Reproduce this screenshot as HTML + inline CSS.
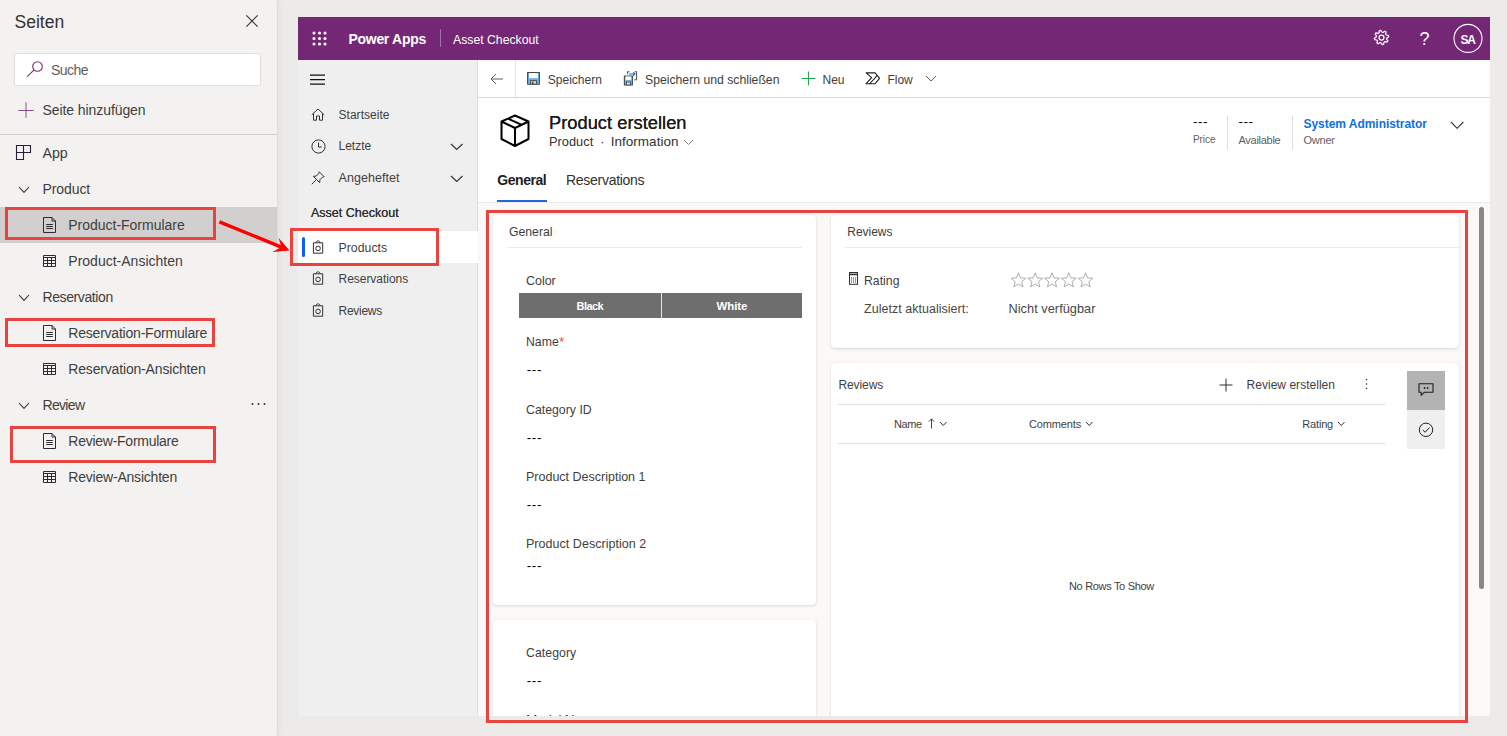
<!DOCTYPE html>
<html lang="de"><head><meta charset="utf-8"><title>Seiten</title>
<style>
html,body{margin:0;padding:0;}
body{width:1507px;height:736px;position:relative;overflow:hidden;background:#edebe9;font-family:"Liberation Sans",sans-serif;}
.r{position:absolute;box-sizing:border-box;}
.t{position:absolute;white-space:pre;line-height:20px;height:20px;}
.card{position:absolute;background:#fff;border-radius:4px;box-shadow:0 1px 3px rgba(0,0,0,.13),0 0 1px rgba(0,0,0,.10);}
</style></head><body>
<div class="r" style="left:0px;top:0px;width:277px;height:736px;background:#f3f2f1;box-shadow:0 0 9px rgba(0,0,0,.07),1px 0 0 rgba(0,0,0,.03);"></div>
<span class="t" style="left:14.50px;top:12.00px;font-size:17.5px;color:#323130;letter-spacing:0.016px;">Seiten</span>
<svg class="r" style="left:245px;top:14px;" width="14" height="14" viewBox="0 0 14 14" fill="none"><path d="M1.4 1.4L12.6 12.6M12.6 1.4L1.4 12.6" stroke="#323130" stroke-width="1.1"/></svg>
<div class="r" style="left:14px;top:53px;width:247px;height:33px;background:#fff;border:1px solid #e1dfdd;border-radius:2px;"></div>
<svg class="r" style="left:26px;top:60px;" width="18" height="18" viewBox="0 0 18 18" fill="none"><circle cx="11.5" cy="6.5" r="4.8" stroke="#7a2c7a" stroke-width="1.1"/><path d="M8.1 9.9L1.2 16.7" stroke="#7a2c7a" stroke-width="1.1"/></svg>
<span class="t" style="left:51.00px;top:60.00px;font-size:14.0px;color:#605e5c;letter-spacing:-0.549px;">Suche</span>
<svg class="r" style="left:17.5px;top:102px;" width="16" height="16" viewBox="0 0 16 16" fill="none"><path d="M8 0.3V15.7M0.3 8.5H15.7" stroke="#8a4d8a" stroke-width="1"/></svg>
<span class="t" style="left:42.50px;top:100.00px;font-size:14.0px;color:#3f3e3d;letter-spacing:-0.080px;">Seite hinzufügen</span>
<div class="r" style="left:0px;top:134px;width:277px;height:1px;background:#d2d0ce;"></div>
<svg class="r" style="left:15px;top:144px;" width="17" height="17" viewBox="0 0 17 17" fill="none"><path d="M1.5 1.5H15.5V8.5H8.5V15.5H1.5Z M8.5 1.5V8.5 M1.5 8.5H8.5" stroke="#2b1b3d" stroke-width="1.1"/></svg>
<span class="t" style="left:42.50px;top:143.00px;font-size:14.25px;color:#3f3e3d;letter-spacing:-0.078px;">App</span>
<div class="r" style="left:0px;top:207px;width:277px;height:36px;background:#d2d0ce;"></div>
<svg class="r" style="left:18.4px;top:185.5px;" width="12" height="7.4" viewBox="0 0 12 7.4" fill="none"><path d="M1 1L6.0 6.4L11 1" stroke="#323130" stroke-width="1.1"/></svg>
<span class="t" style="left:42.50px;top:179.00px;font-size:14.0px;color:#3f3e3d;letter-spacing:-0.091px;">Product</span>
<svg class="r" style="left:43px;top:217px;" width="14" height="17" viewBox="0 0 14 17" fill="none"><path d="M0.5 0.5H9L12.5 4V15.5H0.5Z M9 0.5V4H12.5" stroke="#2d2a33" stroke-width="1" stroke-linejoin="round"/><path d="M3.2 7.5H9.8M3.2 9.5H9.8M3.2 11.5H9.8" stroke="#2d2a33" stroke-width="1"/></svg>
<span class="t" style="left:68.30px;top:215.00px;font-size:14.0px;color:#3f3e3d;letter-spacing:-0.019px;">Product-Formulare</span>
<svg class="r" style="left:43px;top:255px;" width="14" height="13" viewBox="0 0 14 13" fill="none"><path d="M0.5 0.5H12.5V11.5H0.5Z M0.5 5.5H12.5 M0.5 8.5H12.5 M4.5 2.5V11.5 M8.5 2.5V11.5" stroke="#2d2a33" stroke-width="1"/><path d="M0.5 2.5H12.5" stroke="#2d2a33" stroke-width="1"/></svg>
<span class="t" style="left:68.30px;top:251.00px;font-size:14.0px;color:#3f3e3d;letter-spacing:0.007px;">Product-Ansichten</span>
<svg class="r" style="left:18.4px;top:293.5px;" width="12" height="7.4" viewBox="0 0 12 7.4" fill="none"><path d="M1 1L6.0 6.4L11 1" stroke="#323130" stroke-width="1.1"/></svg>
<span class="t" style="left:42.50px;top:287.00px;font-size:14.0px;color:#3f3e3d;letter-spacing:-0.400px;">Reservation</span>
<svg class="r" style="left:43px;top:325px;" width="14" height="17" viewBox="0 0 14 17" fill="none"><path d="M0.5 0.5H9L12.5 4V15.5H0.5Z M9 0.5V4H12.5" stroke="#2d2a33" stroke-width="1" stroke-linejoin="round"/><path d="M3.2 7.5H9.8M3.2 9.5H9.8M3.2 11.5H9.8" stroke="#2d2a33" stroke-width="1"/></svg>
<span class="t" style="left:68.30px;top:323.00px;font-size:14.0px;color:#3f3e3d;letter-spacing:-0.213px;">Reservation-Formulare</span>
<svg class="r" style="left:43px;top:363px;" width="14" height="13" viewBox="0 0 14 13" fill="none"><path d="M0.5 0.5H12.5V11.5H0.5Z M0.5 5.5H12.5 M0.5 8.5H12.5 M4.5 2.5V11.5 M8.5 2.5V11.5" stroke="#2d2a33" stroke-width="1"/><path d="M0.5 2.5H12.5" stroke="#2d2a33" stroke-width="1"/></svg>
<span class="t" style="left:68.30px;top:359.00px;font-size:14.0px;color:#3f3e3d;letter-spacing:-0.172px;">Reservation-Ansichten</span>
<svg class="r" style="left:18.4px;top:401.5px;" width="12" height="7.4" viewBox="0 0 12 7.4" fill="none"><path d="M1 1L6.0 6.4L11 1" stroke="#323130" stroke-width="1.1"/></svg>
<span class="t" style="left:42.50px;top:395.00px;font-size:14.0px;color:#3f3e3d;letter-spacing:-0.681px;">Review</span>
<svg class="r" style="left:251px;top:402px;" width="16" height="4" viewBox="0 0 16 4" fill="none"><circle cx="1.5" cy="2" r="1" fill="#323130"/><circle cx="7.5" cy="2" r="1" fill="#323130"/><circle cx="13.5" cy="2" r="1" fill="#323130"/></svg>
<svg class="r" style="left:43px;top:433px;" width="14" height="17" viewBox="0 0 14 17" fill="none"><path d="M0.5 0.5H9L12.5 4V15.5H0.5Z M9 0.5V4H12.5" stroke="#2d2a33" stroke-width="1" stroke-linejoin="round"/><path d="M3.2 7.5H9.8M3.2 9.5H9.8M3.2 11.5H9.8" stroke="#2d2a33" stroke-width="1"/></svg>
<span class="t" style="left:68.30px;top:431.00px;font-size:14.0px;color:#3f3e3d;letter-spacing:-0.257px;">Review-Formulare</span>
<svg class="r" style="left:43px;top:471px;" width="14" height="13" viewBox="0 0 14 13" fill="none"><path d="M0.5 0.5H12.5V11.5H0.5Z M0.5 5.5H12.5 M0.5 8.5H12.5 M4.5 2.5V11.5 M8.5 2.5V11.5" stroke="#2d2a33" stroke-width="1"/><path d="M0.5 2.5H12.5" stroke="#2d2a33" stroke-width="1"/></svg>
<span class="t" style="left:68.30px;top:467.00px;font-size:14.0px;color:#3f3e3d;letter-spacing:-0.210px;">Review-Ansichten</span>
<div class="r" style="left:298px;top:17px;width:1192px;height:699px;background:#fff;"></div>
<div class="r" style="left:298px;top:17px;width:1192px;height:43px;background:#742774;"></div>
<svg class="r" style="left:311.6px;top:31.4px;" width="16" height="16" viewBox="0 0 16 16" fill="none"><circle cx="2.0" cy="2.0" r="1.55" fill="#fff"/><circle cx="2.0" cy="7.5" r="1.55" fill="#fff"/><circle cx="2.0" cy="13.0" r="1.55" fill="#fff"/><circle cx="7.5" cy="2.0" r="1.55" fill="#fff"/><circle cx="7.5" cy="7.5" r="1.55" fill="#fff"/><circle cx="7.5" cy="13.0" r="1.55" fill="#fff"/><circle cx="13.0" cy="2.0" r="1.55" fill="#fff"/><circle cx="13.0" cy="7.5" r="1.55" fill="#fff"/><circle cx="13.0" cy="13.0" r="1.55" fill="#fff"/></svg>
<span class="t" style="left:348.50px;top:29.00px;font-size:14.0px;color:#fff;letter-spacing:-0.298px;font-weight:bold;">Power Apps</span>
<div class="r" style="left:440px;top:29px;width:1px;height:18px;background:rgba(255,255,255,.35);"></div>
<span class="t" style="left:453.00px;top:30.00px;font-size:12.25px;color:#fff;letter-spacing:-0.007px;">Asset Checkout</span>
<svg class="r" style="left:1372.9px;top:29.3px;" width="17" height="17" viewBox="0 0 17 17" fill="none"><path d="M14.85 11.89L14.07 13.07L11.86 12.60L11.00 13.17L10.59 15.39L9.21 15.67L7.98 13.77L6.96 13.57L5.11 14.85L3.93 14.07L4.40 11.86L3.83 11.00L1.61 10.59L1.33 9.21L3.23 7.98L3.43 6.96L2.15 5.11L2.93 3.93L5.14 4.40L6.00 3.83L6.41 1.61L7.79 1.33L9.02 3.23L10.04 3.43L11.89 2.15L13.07 2.93L12.60 5.14L13.17 6.00L15.39 6.41L15.67 7.79L13.77 9.02L13.57 10.04Z" stroke="#fff" stroke-width="1.25" stroke-linejoin="round"/><circle cx="8.5" cy="8.5" r="2.5" stroke="#fff" stroke-width="1.25"/></svg>
<span class="t" style="left:1419.50px;top:29.00px;font-size:18px;color:#fff;letter-spacing:0.000px;">?</span>
<svg class="r" style="left:1452px;top:23px;" width="32" height="32" viewBox="0 0 32 32" fill="none"><circle cx="16" cy="15.4" r="14" stroke="#fff" stroke-width="1.1"/></svg>
<span class="t" style="left:1460.60px;top:30.00px;font-size:12px;color:#fff;letter-spacing:-1.470px;font-weight:bold;">SA</span>
<div class="r" style="left:298px;top:60px;width:180px;height:656px;background:#efefef;border-right:1px solid #dcdcdc;"></div>
<svg class="r" style="left:310px;top:74px;" width="15" height="11" viewBox="0 0 15 11" fill="none"><path d="M0 1H15M0 5.5H15M0 10H15" stroke="#111" stroke-width="1.25"/></svg>
<svg class="r" style="left:310.6px;top:107.5px;" width="14" height="13" viewBox="0 0 14 13" fill="none"><path d="M0.8 6.8L7 1L13.2 6.8 M2.5 5.5V12.2H5.5V8H8.5V12.2H11.5V5.5" stroke="#323130" stroke-width="1"/></svg>
<span class="t" style="left:338.50px;top:105.00px;font-size:12.0px;color:#3f3e3d;letter-spacing:0.034px;">Startseite</span>
<svg class="r" style="left:310.5px;top:138.5px;" width="15" height="15" viewBox="0 0 15 15" fill="none"><circle cx="7.5" cy="7.5" r="6.6" stroke="#323130" stroke-width="1"/><path d="M7.5 3.5V8H10.8" stroke="#323130" stroke-width="1"/></svg>
<span class="t" style="left:338.50px;top:136.00px;font-size:12.0px;color:#3f3e3d;letter-spacing:0.002px;">Letzte</span>
<svg class="r" style="left:311px;top:171px;" width="14" height="14" viewBox="0 0 14 14" fill="none"><path d="M8.2 0.8L13.2 5.8L11.5 6.2L9 8.7L8.6 11.6L2.4 5.4L5.3 5L7.8 2.5Z M5.4 8.6L0.8 13.2" stroke="#323130" stroke-width="1"/></svg>
<span class="t" style="left:338.50px;top:168.00px;font-size:12.5px;color:#3f3e3d;letter-spacing:0.059px;">Angeheftet</span>
<svg class="r" style="left:450.3px;top:143.2px;" width="13.5" height="7.5" viewBox="0 0 13.5 7.5" fill="none"><path d="M1 1L6.75 6.5L12.5 1" stroke="#323130" stroke-width="1.1"/></svg>
<svg class="r" style="left:450.3px;top:174.6px;" width="13.5" height="7.5" viewBox="0 0 13.5 7.5" fill="none"><path d="M1 1L6.75 6.5L12.5 1" stroke="#323130" stroke-width="1.1"/></svg>
<span class="t" style="left:311.00px;top:203.00px;font-size:12.5px;color:#323130;letter-spacing:0.012px;text-shadow:0 0 .4px #323130;">Asset Checkout</span>
<div class="r" style="left:298px;top:231px;width:180px;height:32px;background:#fff;"></div>
<div class="r" style="left:302px;top:237px;width:3px;height:19.6px;background:#0f5bff;border-radius:2px;"></div>
<svg class="r" style="left:312px;top:239px;" width="12" height="15" viewBox="0 0 12 15" fill="none"><path d="M1.4 3.8H10.7V14.2H1.4Z" stroke="#323130" stroke-width="1"/><path d="M3.9 3.8C4.4 1.2 7.7 1.2 8.2 3.8" stroke="#323130" stroke-width="1"/><circle cx="6.05" cy="9.4" r="2.3" stroke="#323130" stroke-width="1"/></svg>
<span class="t" style="left:338.50px;top:238.00px;font-size:12.25px;color:#3f3e3d;letter-spacing:0.051px;">Products</span>
<svg class="r" style="left:312px;top:270px;" width="12" height="15" viewBox="0 0 12 15" fill="none"><path d="M1.4 3.8H10.7V14.2H1.4Z" stroke="#323130" stroke-width="1"/><path d="M3.9 3.8C4.4 1.2 7.7 1.2 8.2 3.8" stroke="#323130" stroke-width="1"/><circle cx="6.05" cy="9.4" r="2.3" stroke="#323130" stroke-width="1"/></svg>
<span class="t" style="left:338.50px;top:269.00px;font-size:12.0px;color:#3f3e3d;letter-spacing:-0.030px;">Reservations</span>
<svg class="r" style="left:312px;top:302px;" width="12" height="15" viewBox="0 0 12 15" fill="none"><path d="M1.4 3.8H10.7V14.2H1.4Z" stroke="#323130" stroke-width="1"/><path d="M3.9 3.8C4.4 1.2 7.7 1.2 8.2 3.8" stroke="#323130" stroke-width="1"/><circle cx="6.05" cy="9.4" r="2.3" stroke="#323130" stroke-width="1"/></svg>
<span class="t" style="left:338.50px;top:301.00px;font-size:12.0px;color:#3f3e3d;letter-spacing:-0.274px;">Reviews</span>
<div class="r" style="left:478px;top:97px;width:1012px;height:1px;background:#d8d8d8;"></div>
<div class="r" style="left:515px;top:60px;width:1px;height:37px;background:#e6e6e6;"></div>
<svg class="r" style="left:490px;top:72.5px;" width="14" height="12" viewBox="0 0 14 12" fill="none"><path d="M13 6H1M6 1L1 6L6 11" stroke="#605e5c" stroke-width="1"/></svg>
<svg class="r" style="left:527px;top:72px;" width="14" height="14" viewBox="0 0 14 14" fill="none"><path d="M0.6 0.6H12.4V12.2H0.6Z" fill="#6fb3ee" stroke="#4a4a4a" stroke-width="1.1"/><rect x="2" y="1.1" width="9" height="5" fill="#fff"/><rect x="3.6" y="8.6" width="5.8" height="3.6" fill="#cfe6fa" stroke="#4a4a4a" stroke-width="1"/><rect x="5" y="9.6" width="1.6" height="2.4" fill="#4a4a4a"/></svg>
<span class="t" style="left:547.75px;top:70.00px;font-size:12.0px;color:#3f3e3d;letter-spacing:0.021px;">Speichern</span>
<svg class="r" style="left:623px;top:70px;" width="15" height="16" viewBox="0 0 15 16" fill="none"><path d="M1.4 6H9.4V15H1.4Z" fill="#6fb3ee" stroke="#4a4a4a" stroke-width="1.1"/><rect x="2.6" y="6.5" width="5.6" height="3.4" fill="#fff"/><rect x="3.4" y="12" width="4" height="3" fill="#cfe6fa" stroke="#4a4a4a" stroke-width="0.9"/><path d="M4.6 4.2V1.7H6.4 M11.8 1.7H13.6V9.8H11.2" stroke="#4a4a4a" stroke-width="1"/><path d="M6 4H11.8M10.2 2.2L12 4L10.2 5.8" stroke="#1f6fd0" stroke-width="1.1"/></svg>
<span class="t" style="left:645.00px;top:70.00px;font-size:12.25px;color:#3f3e3d;letter-spacing:-0.017px;">Speichern und schließen</span>
<svg class="r" style="left:801px;top:71px;" width="15" height="15" viewBox="0 0 15 15" fill="none"><path d="M7.5 0.5V14.5M0.5 7.5H14.5" stroke="#1ea854" stroke-width="1.1"/></svg>
<span class="t" style="left:822.50px;top:70.00px;font-size:12.0px;color:#3f3e3d;letter-spacing:-0.032px;">Neu</span>
<svg class="r" style="left:865px;top:71.5px;" width="16" height="13" viewBox="0 0 16 13" fill="none"><path d="M1.1 0.9H10.1L14.6 6.4L10.1 11.7H1.1L6.6 5.6Z M12 3.6L5 11.5" stroke="#201f1e" stroke-width="1.1" stroke-linejoin="round"/></svg>
<span class="t" style="left:887.50px;top:70.00px;font-size:12.0px;color:#3f3e3d;letter-spacing:-0.045px;">Flow</span>
<svg class="r" style="left:924.8px;top:74.7px;" width="12" height="7" viewBox="0 0 12 7" fill="none"><path d="M1 1L6.0 6L11 1" stroke="#605e5c" stroke-width="1"/></svg>
<svg class="r" style="left:499px;top:114px;" width="32" height="34" viewBox="0 0 32 34" fill="none"><path d="M16 1.5L29.5 7.5V25L16 32L2.5 25V7.5Z M2.5 7.5L16 14L29.5 7.5 M16 14V32 M9 4.6L22.8 10.8" stroke="#000" stroke-width="2" stroke-linejoin="round"/></svg>
<span class="t" style="left:549.00px;top:113.00px;font-size:18.25px;color:#1b1b1b;letter-spacing:0.035px;text-shadow:0 0 .5px #1b1b1b;">Product erstellen</span>
<span class="t" style="left:549.00px;top:132.00px;font-size:12.75px;color:#323130;letter-spacing:0.043px;">Product</span>
<span class="t" style="left:600.00px;top:132.00px;font-size:13.5px;color:#323130;letter-spacing:0.000px;">·</span>
<span class="t" style="left:610.75px;top:132.00px;font-size:13.5px;color:#323130;letter-spacing:0.017px;">Information</span>
<svg class="r" style="left:683px;top:138.7px;" width="11" height="6.5" viewBox="0 0 11 6.5" fill="none"><path d="M1 1L5.5 5.5L10 1" stroke="#8a8886" stroke-width="1"/></svg>
<span class="t" style="left:1193.00px;top:112.00px;font-size:13.5px;color:#000;letter-spacing:0.506px;">---</span>
<span class="t" style="left:1193.00px;top:130.00px;font-size:10.0px;color:#605e5c;letter-spacing:-0.071px;">Price</span>
<div class="r" style="left:1227px;top:116px;width:1px;height:34px;background:#e1dfdd;"></div>
<span class="t" style="left:1238.50px;top:112.00px;font-size:13.5px;color:#000;letter-spacing:0.506px;">---</span>
<span class="t" style="left:1238.50px;top:130.00px;font-size:11.0px;color:#605e5c;letter-spacing:-0.280px;">Available</span>
<div class="r" style="left:1292px;top:116px;width:1px;height:34px;background:#e1dfdd;"></div>
<span class="t" style="left:1303.50px;top:114.00px;font-size:12.0px;color:#0f6fe6;letter-spacing:-0.040px;font-weight:bold;">System Administrator</span>
<span class="t" style="left:1303.50px;top:130.00px;font-size:11.0px;color:#605e5c;letter-spacing:-0.225px;">Owner</span>
<svg class="r" style="left:1449.7px;top:120.5px;" width="14.3" height="8.3" viewBox="0 0 14.3 8.3" fill="none"><path d="M1 1L7.15 7.3L13.3 1" stroke="#323130" stroke-width="1.1"/></svg>
<span class="t" style="left:497.25px;top:170.00px;font-size:14.0px;color:#201f1e;letter-spacing:-0.448px;font-weight:bold;">General</span>
<span class="t" style="left:566.00px;top:170.00px;font-size:14.0px;color:#323130;letter-spacing:-0.282px;">Reservations</span>
<div class="r" style="left:497px;top:199.5px;width:50.4px;height:2px;background:#2266e3;"></div>
<div class="r" style="left:478px;top:202px;width:1012px;height:514px;background:#faf9f8;border-top:1px solid #edebe9;"></div>
<div class="r" style="left:1479px;top:207px;width:5px;height:382px;background:#8a8886;border-radius:3px;"></div>
<div class="card" style="left:493px;top:215px;width:323px;height:390px;border-radius:4px;"></div>
<div class="card" style="left:493px;top:619.5px;width:323px;height:96.5px;border-radius:4px 4px 0 0;"></div>
<div class="card" style="left:831px;top:215px;width:628px;height:132.5px;border-radius:4px;"></div>
<div class="card" style="left:831px;top:363px;width:628px;height:353px;border-radius:4px 4px 0 0;"></div>
<span class="t" style="left:509.00px;top:222.00px;font-size:12.25px;color:#3f3e3d;letter-spacing:-0.014px;">General</span>
<div class="r" style="left:507px;top:247px;width:295px;height:1px;background:#edebe9;"></div>
<span class="t" style="left:526.00px;top:271.00px;font-size:12.5px;color:#3f3e3d;letter-spacing:-0.043px;">Color</span>
<div class="r" style="left:519px;top:293px;width:283px;height:25px;background:#6e6e6e;"></div>
<div class="r" style="left:660.5px;top:293px;width:1.2px;height:25px;background:#e8e8e8;"></div>
<span class="t" style="left:576.50px;top:296.00px;font-size:11.0px;color:#fff;letter-spacing:-0.538px;font-weight:bold;">Black</span>
<span class="t" style="left:716.50px;top:296.00px;font-size:11.5px;color:#fff;letter-spacing:-0.075px;font-weight:bold;">White</span>
<span class="t" style="left:526.00px;top:332.00px;font-size:12.25px;color:#3f3e3d;letter-spacing:0.008px;">Name</span>
<span class="t" style="left:559.00px;top:332.00px;font-size:13.5px;color:#e8443f;letter-spacing:0.000px;">*</span>
<span class="t" style="left:526.75px;top:360.00px;font-size:13.5px;color:#000;letter-spacing:0.606px;">---</span>
<span class="t" style="left:526.00px;top:400.00px;font-size:12.25px;color:#3f3e3d;letter-spacing:0.034px;">Category ID</span>
<span class="t" style="left:526.75px;top:428.00px;font-size:13.5px;color:#000;letter-spacing:0.606px;">---</span>
<span class="t" style="left:526.00px;top:467.00px;font-size:12.5px;color:#3f3e3d;letter-spacing:-0.000px;">Product Description 1</span>
<span class="t" style="left:526.75px;top:495.00px;font-size:13.5px;color:#000;letter-spacing:0.606px;">---</span>
<span class="t" style="left:526.00px;top:534.00px;font-size:12.5px;color:#3f3e3d;letter-spacing:0.035px;">Product Description 2</span>
<span class="t" style="left:526.75px;top:556.00px;font-size:13.5px;color:#000;letter-spacing:0.606px;">---</span>
<span class="t" style="left:526.00px;top:643.00px;font-size:12.25px;color:#3f3e3d;letter-spacing:0.071px;">Category</span>
<span class="t" style="left:526.75px;top:671.00px;font-size:13.5px;color:#000;letter-spacing:0.606px;">---</span>
<div class="r" style="left:520px;top:700px;width:200px;height:16px;overflow:hidden;"><span class="t" style="left:6px;top:9.8px;font-size:13.5px;color:#323130;letter-spacing:-0.3px;">Model Name</span></div>
<span class="t" style="left:847.25px;top:222.00px;font-size:12.0px;color:#3f3e3d;letter-spacing:-0.024px;">Reviews</span>
<div class="r" style="left:845px;top:247px;width:614px;height:1px;background:#edebe9;"></div>
<svg class="r" style="left:849.3px;top:272px;" width="10" height="13" viewBox="0 0 10 13" fill="none"><rect x="0.5" y="0.5" width="8" height="11.8" stroke="#323130" stroke-width="1"/><path d="M0.5 2.4H8.5" stroke="#323130" stroke-width="1.6"/><rect x="2" y="5.5" width="1" height="1" fill="#323130"/><rect x="2" y="7.5" width="1" height="1" fill="#323130"/><rect x="2" y="9.5" width="1" height="1" fill="#323130"/><rect x="4" y="5.5" width="1" height="1" fill="#323130"/><rect x="4" y="7.5" width="1" height="1" fill="#323130"/><rect x="4" y="9.5" width="1" height="1" fill="#323130"/><rect x="6" y="5.5" width="1" height="1" fill="#323130"/><rect x="6" y="7.5" width="1" height="1" fill="#323130"/><rect x="6" y="9.5" width="1" height="1" fill="#323130"/></svg>
<span class="t" style="left:864.00px;top:271.00px;font-size:12.25px;color:#3f3e3d;letter-spacing:0.018px;">Rating</span>
<svg class="r" style="left:1010.4px;top:271.5px;" width="86" height="17" viewBox="0 0 86 17" fill="none"><path d="M8.40 0.80L10.40 5.85L15.82 6.19L11.63 9.65L12.98 14.91L8.40 12.00L3.82 14.91L5.17 9.65L0.98 6.19L6.40 5.85Z" stroke="#adadad" stroke-width="1" stroke-linejoin="miter"/><path d="M25.20 0.80L27.20 5.85L32.62 6.19L28.43 9.65L29.78 14.91L25.20 12.00L20.62 14.91L21.97 9.65L17.78 6.19L23.20 5.85Z" stroke="#adadad" stroke-width="1" stroke-linejoin="miter"/><path d="M42.00 0.80L44.00 5.85L49.42 6.19L45.23 9.65L46.58 14.91L42.00 12.00L37.42 14.91L38.77 9.65L34.58 6.19L40.00 5.85Z" stroke="#adadad" stroke-width="1" stroke-linejoin="miter"/><path d="M58.80 0.80L60.80 5.85L66.22 6.19L62.03 9.65L63.38 14.91L58.80 12.00L54.22 14.91L55.57 9.65L51.38 6.19L56.80 5.85Z" stroke="#adadad" stroke-width="1" stroke-linejoin="miter"/><path d="M75.60 0.80L77.60 5.85L83.02 6.19L78.83 9.65L80.18 14.91L75.60 12.00L71.02 14.91L72.37 9.65L68.18 6.19L73.60 5.85Z" stroke="#adadad" stroke-width="1" stroke-linejoin="miter"/></svg>
<span class="t" style="left:864.00px;top:299.00px;font-size:12.5px;color:#484644;letter-spacing:0.025px;">Zuletzt aktualisiert:</span>
<span class="t" style="left:1008.50px;top:299.00px;font-size:12.75px;color:#484644;letter-spacing:0.039px;">Nicht verfügbar</span>
<span class="t" style="left:838.50px;top:375.00px;font-size:12.0px;color:#3f3e3d;letter-spacing:-0.108px;">Reviews</span>
<div class="r" style="left:838px;top:404px;width:547px;height:1px;background:#e1dfdd;"></div>
<div class="r" style="left:838px;top:443px;width:547px;height:1px;background:#e1dfdd;"></div>
<span class="t" style="left:894.00px;top:414.00px;font-size:11.0px;color:#3f3e3d;letter-spacing:-0.448px;">Name</span>
<svg class="r" style="left:928px;top:417.5px;" width="7" height="11" viewBox="0 0 7 11" fill="none"><path d="M3.5 10.5V1M0.8 3.6L3.5 0.9L6.2 3.6" stroke="#323130" stroke-width="0.9"/></svg>
<svg class="r" style="left:938.5px;top:421px;" width="8.5" height="5.5" viewBox="0 0 8.5 5.5" fill="none"><path d="M1 1L4.25 4.5L7.5 1" stroke="#323130" stroke-width="1"/></svg>
<span class="t" style="left:1029.00px;top:414.00px;font-size:11.0px;color:#3f3e3d;letter-spacing:-0.140px;">Comments</span>
<svg class="r" style="left:1084.5px;top:421px;" width="8.5" height="5.5" viewBox="0 0 8.5 5.5" fill="none"><path d="M1 1L4.25 4.5L7.5 1" stroke="#323130" stroke-width="1"/></svg>
<span class="t" style="left:1302.30px;top:414.00px;font-size:11.0px;color:#3f3e3d;letter-spacing:-0.179px;">Rating</span>
<svg class="r" style="left:1337px;top:421px;" width="8.5" height="5.5" viewBox="0 0 8.5 5.5" fill="none"><path d="M1 1L4.25 4.5L7.5 1" stroke="#323130" stroke-width="1"/></svg>
<svg class="r" style="left:1218.5px;top:377.5px;" width="14" height="14" viewBox="0 0 14 14" fill="none"><path d="M7 0.5V13.5M0.5 7H13.5" stroke="#323130" stroke-width="1"/></svg>
<span class="t" style="left:1246.50px;top:375.00px;font-size:12.0px;color:#3f3e3d;letter-spacing:0.031px;">Review erstellen</span>
<svg class="r" style="left:1365px;top:378px;" width="3" height="12" viewBox="0 0 3 12" fill="none"><circle cx="1.5" cy="1.5" r="0.8" fill="#323130"/><circle cx="1.5" cy="6" r="0.8" fill="#323130"/><circle cx="1.5" cy="10.5" r="0.8" fill="#323130"/></svg>
<span class="t" style="left:1069.00px;top:576.00px;font-size:11.0px;color:#3f3e3d;letter-spacing:-0.319px;">No Rows To Show</span>
<div class="r" style="left:1407px;top:371px;width:38px;height:38.5px;background:#b3b3b3;"></div>
<div class="r" style="left:1407px;top:409.5px;width:38px;height:39.5px;background:#efefef;"></div>
<svg class="r" style="left:1418px;top:383px;" width="16" height="14" viewBox="0 0 16 14" fill="none"><path d="M1 0.8H15V9.2H6.5L3.2 12.4V9.2H1Z" stroke="#201f1e" stroke-width="1.1" stroke-linejoin="round"/><circle cx="6.6" cy="5" r="0.9" fill="#201f1e"/><circle cx="9.6" cy="5" r="0.9" fill="#201f1e"/></svg>
<svg class="r" style="left:1418px;top:421.5px;" width="16" height="16" viewBox="0 0 16 16" fill="none"><circle cx="8" cy="7.8" r="6.7" stroke="#201f1e" stroke-width="1"/><path d="M4.8 8L7.2 10.3L11.4 5.6" stroke="#201f1e" stroke-width="1"/></svg>
<div class="r" style="left:298px;top:716px;width:1192px;height:20px;background:#edebe9;"></div>
<div class="r" style="left:5.4px;top:207px;width:210.6px;height:33px;background:transparent;border:3px solid #e8433f;"></div>
<div class="r" style="left:5.4px;top:318px;width:210.1px;height:29px;background:transparent;border:3px solid #e8433f;"></div>
<div class="r" style="left:10px;top:426px;width:205.5px;height:37px;background:transparent;border:3px solid #e8433f;"></div>
<div class="r" style="left:290px;top:228px;width:149px;height:38px;background:transparent;border:3px solid #e8433f;"></div>
<div class="r" style="left:486px;top:210px;width:982px;height:513px;background:transparent;border:3px solid #e8433f;"></div>
<svg class="r" style="left:215px;top:215px;" width="80" height="42" viewBox="0 0 80 42" fill="none"><path d="M4.4 6.9L67 32.3" stroke="#ff0000" stroke-width="3.4"/><path d="M74.6 35.4L57.3 37L66.5 32L63.4 22.7Z" fill="#ff0000"/></svg>
</body></html>
